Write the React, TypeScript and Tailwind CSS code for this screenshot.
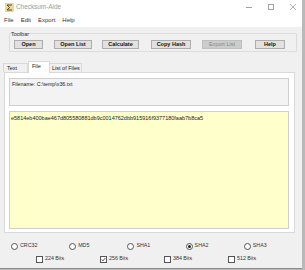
import React from "react";

const buttons = [
  { label: "Open", cls: "ml-[4px] w-[29px]", disabled: false },
  { label: "Open List", cls: "ml-[11px] w-[38px]", disabled: false },
  { label: "Calculate", cls: "ml-[10px] w-[37px]", disabled: false },
  { label: "Copy Hash", cls: "ml-[12px] w-[40px]", disabled: false },
  { label: "Export List", cls: "ml-[11px] w-[40px]", disabled: true },
  { label: "Help", cls: "ml-[13px] w-[30px]", disabled: false },
];

const radios = ["CRC32", "MD5", "SHA1", "SHA2", "SHA3"];
const bits = ["224 Bits", "256 Bits", "384 Bits", "512 Bits"];

const AppIcon = () => (
  <svg width="9" height="9" viewBox="0 0 9 9">
    <rect x="0" y="0" width="9" height="9" fill="#e8d9a0" />
    <path d="M2 2h5M2 2l2.5 2.5L2 7h5" stroke="#5a4a20" strokeWidth="1" fill="none" />
  </svg>
);

const App = () => {
  return (
    <div className="w-[305px] h-[270px] overflow-hidden bg-[#b9b9b9] font-['Liberation_Sans',Arial,sans-serif]">
      <div className="w-[302px] h-[269px] flex flex-col bg-white border-b border-[#8c8c8c]">
        {/* title bar */}
        <div className="h-[14px] flex items-center pl-[5px]">
          <AppIcon />
          <span className="ml-[2px] text-[6.4px] text-[#9a9a9a]">Checksum-Aide</span>
          <div className="ml-auto flex items-center">
            <div className="w-[6px] h-px bg-[#a0a0a0] mr-[16px]" />
            <div className="w-[6px] h-[6px] border border-[#a0a0a0] mr-[16px]" />
            <svg width="6" height="6" viewBox="0 0 6 6" className="mr-[6px]">
              <path d="M0 0L6 6M6 0L0 6" stroke="#a0a0a0" strokeWidth="0.8" />
            </svg>
          </div>
        </div>

        {/* menu bar */}
        <div className="h-[13px] flex items-center pl-[4px] gap-[7px] text-[6px] text-[#333]">
          <span>File</span>
          <span>Edit</span>
          <span>Export</span>
          <span>Help</span>
        </div>

        {/* body */}
        <div className="flex-1 bg-[#f0f0f0] flex flex-col">
          {/* toolbar group */}
          <div className="mt-[6px] ml-[9px] w-[288px] border border-[#dcdcdc] rounded-[1px] pb-[2px]">
            <div className="-mt-[3px] ml-[1px] h-[6px] leading-[6px] text-[5.5px] text-[#333]">
              Toolbar
            </div>
            <div className="mt-[3px] flex">
              {buttons.map((b) => (
                <div
                  key={b.label}
                  className={`${b.cls} h-[9px] flex items-center justify-center border text-[5.5px] ${
                    b.disabled
                      ? "bg-[#cccccc] border-[#bfbfbf] text-[#8a8a8a]"
                      : "bg-[#e1e1e1] border-[#adadad] text-[#111] font-bold"
                  }`}
                >
                  {b.label}
                </div>
              ))}
            </div>
          </div>

          {/* tabs */}
          <div className="mt-[9px] ml-[3px] h-[11px] flex items-end relative z-10">
            <div className="w-[25px] h-[9px] border border-b-0 border-[#d9d9d9] bg-[#f0f0f0] text-[5.5px] text-[#222] pl-[3px] leading-[8px]">
              Text
            </div>
            <div className="w-[22px] h-[12px] -mb-px border border-b-0 border-[#d9d9d9] bg-white text-[5.5px] text-[#222] pl-[3px] leading-[8px]">
              File
            </div>
            <div className="w-[32px] h-[9px] border border-b-0 border-l-0 border-[#d9d9d9] bg-[#f0f0f0] text-[5.5px] text-[#222] pl-[2px] leading-[8px]">
              List of Files
            </div>
          </div>

          {/* tab panel */}
          <div className="ml-[4px] w-[291px] h-[161px] bg-white border border-[#d9d9d9] pl-[4px] pt-[5px]">
            <div className="w-[280px] h-[28px] bg-[#f3f3f3] border border-[#cfcfcf] pl-[2px] pt-[2px] text-[5.3px] text-[#222]">
              Filename: C:\temp\x36.txt
            </div>
            <div className="mt-[5px] w-[280px] h-[118px] bg-[#ffffcc] border border-[#cfcfcf] pl-[1px] pt-[2px] text-[5.5px] text-[#222]">
              e5814eb400bae467d805580881db9c0014762dbb915916f9377180faab7b8ca5
            </div>
          </div>

          {/* radios */}
          <div className="mt-[9px] h-[8px] pl-[11px] flex items-center">
            {radios.map((r) => (
              <div key={r} className="w-[61px] flex items-center text-[5.3px] text-[#333]">
                <div className="w-[7px] h-[7px] rounded-full border border-[#555] bg-white flex items-center justify-center">
                  {r === "SHA2" && <div className="w-[3px] h-[3px] rounded-full bg-[#222]" />}
                </div>
                <span className="ml-[2px]">{r}</span>
              </div>
            ))}
          </div>

          {/* bit sizes */}
          <div className="mt-[5px] h-[8px] pl-[36px] flex items-center">
            {bits.map((b) => (
              <div key={b} className="w-[64px] flex items-center text-[5.3px] text-[#333]">
                <div className="w-[7px] h-[7px] border border-[#555] bg-white flex items-center justify-center">
                  {b === "256 Bits" && (
                    <svg width="5" height="5" viewBox="0 0 5 5">
                      <path d="M0.8 2.5L2 3.8L4.3 1" stroke="#222" strokeWidth="0.8" fill="none" />
                    </svg>
                  )}
                </div>
                <span className="ml-[2px]">{b}</span>
              </div>
            ))}
          </div>
        </div>
      </div>
    </div>
  );
};

export default App;
